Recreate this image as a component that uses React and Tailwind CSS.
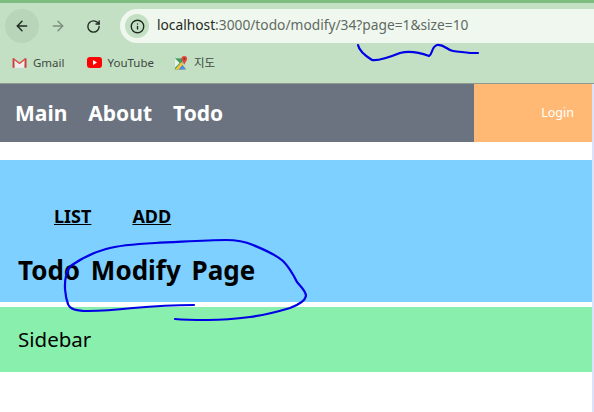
import { ArrowLeft, ArrowRight, RotateCw, Info } from 'lucide-react'

const uiFont = "font-['Noto_Sans','Noto_Sans_CJK_KR',sans-serif]"

const GmailIcon = () => (
  <svg width="15" height="12" viewBox="0 0 16 12">
    <path d="M0.5 1.5 L8 7 L15.5 1.5 V11 H0.5 Z" fill="#eeeeee" />
    <path d="M0.5 11 V1.5 L2.5 1 L2.8 11 Z" fill="#c5443a" />
    <path d="M15.5 11 V1.5 L13.5 1 L13.2 11 Z" fill="#c5443a" />
    <path d="M0.5 1.5 L2 0.8 L8 5.4 L14 0.8 L15.5 1.5 L8 7.4 Z" fill="#e0483e" />
  </svg>
)

const YoutubeIcon = () => (
  <svg width="15" height="11" viewBox="0 0 15 11">
    <rect width="15" height="11" rx="3" fill="#ff0000" />
    <path d="M6 3 L10 5.5 L6 8 Z" fill="#ffffff" />
  </svg>
)

const MapsIcon = () => (
  <svg width="14" height="16" viewBox="0 0 15 16">
    <path d="M1 3 H9 V15 H1 Z" fill="#3f9f5f" />
    <path d="M1 15 L8 7 L13 15 Z" fill="#f7c52f" />
    <path d="M5 15 L9 10 L13 15 Z" fill="#4a8cf0" />
    <path d="M1 3 L6 8 L1 13 Z" fill="#eeeeee" />
    <circle cx="11" cy="3.5" r="3" fill="#e0483e" />
    <path d="M8.5 5 L11 10 L13.5 5 Z" fill="#e0483e" />
    <circle cx="11" cy="3.5" r="1" fill="#8f2a24" />
  </svg>
)

const Bookmark = ({ icon, label, className }) => (
  <div className={`flex items-center gap-[6px] ${className}`}>
    {icon}
    <span className="text-[11.5px] leading-none text-[#3c4a3f]">{label}</span>
  </div>
)

const Scribbles = () => (
  <svg className="absolute left-0 top-0 pointer-events-none" width="594" height="412" fill="none" stroke="#0000e6" strokeWidth="2.2" strokeLinecap="round" strokeLinejoin="round">
    <path d="M358 45 C359 50 364 55 372 60 C378 61 390 57 400 53 C408 51 418 52 429 56 C433 54 431 47 437 45 C444 44 447 50 453 51 C459 52 464 52 470 53 L478 53" />
    <path d="M194 305 C175 305 155 306 133 308 C115 310 100 311 88 311 C78 311 70 310 68 304 C65 296 64 284 66 276 C67 270 68 268 72 265 C82 258 92 253 106 249 C120 245 135 244 155 243 C180 242 205 240 226 240 C238 240 246 242 253 245 C265 250 275 254 283 261 C290 268 294 276 297 282 C301 287 306 291 306 296 C305 301 298 305 290 308 C280 311 265 315 250 317 C235 319 222 320 208 320 C195 320 185 320 175 319" />
  </svg>
)

export default function App() {
  return (
    <div className={`relative w-[594px] h-[412px] overflow-hidden bg-white ${uiFont}`}>
      <div className="h-[3px] bg-[#7dbd80]" />

      {/* browser chrome */}
      <div className="h-[81px] bg-[#c4e0c4] border-b border-[#8e9a8e] pt-[6px]">
        <div className="flex items-center h-[34px]">
          <div className="flex items-center justify-center w-[34px] h-[34px] ml-[5px] rounded-full bg-[#b9d5b9]">
            <ArrowLeft size={16} strokeWidth={2.2} color="#1f2a20" />
          </div>
          <ArrowRight size={16} strokeWidth={2.2} color="#7d8f7e" className="ml-[11px]" />
          <RotateCw size={15} strokeWidth={2.2} color="#1f2a20" className="ml-[20px]" />
          <div className="flex items-center flex-1 h-[34px] ml-[19px] pl-[5px] rounded-l-full bg-[#eff7ef]">
            <div className="flex items-center justify-center w-[24px] h-[24px] rounded-full bg-[#c4e0c4]">
              <Info size={15} strokeWidth={2.2} color="#1f2a20" />
            </div>
            <span className="ml-[8px] -mt-[2px] text-[13.75px] text-[#1f2a20]">
              localhost<span className="text-[#5f6b62]">:3000/todo/modify/34?page=1&amp;size=10</span>
            </span>
          </div>
        </div>
        <div className="flex items-center h-[21px] mt-[9px]">
          <Bookmark icon={<GmailIcon />} label="Gmail" className="ml-[12px]" />
          <Bookmark icon={<YoutubeIcon />} label="YouTube" className="ml-[22px]" />
          <Bookmark icon={<MapsIcon />} label="지도" className="ml-[20px]" />
        </div>
      </div>

      {/* nav */}
      <div className="flex h-[58px] pr-[2px] bg-white">
        <div className="flex flex-1 items-center gap-[21px] pl-[15px] pt-[2px] bg-[#6b7280] text-[21px] font-bold text-white">
          <span>Main</span>
          <span>About</span>
          <span>Todo</span>
        </div>
        <div className="flex items-center justify-end w-[118px] pr-[18px] bg-[#ffb974] text-[12.5px] text-white">
          Login
        </div>
      </div>

      <div className="h-[18px]" />

      {/* page header */}
      <div className="h-[142px] bg-[#7dd0ff] mr-[2px] pl-[18px] pt-[43px]">
        <div className="flex gap-[41px] pl-[36px] text-[18px] leading-[26px] font-bold text-black underline">
          <span>LIST</span>
          <span>ADD</span>
        </div>
        <h1 className="mt-[23px] text-[26px] leading-[36px] font-bold text-black [word-spacing:4px]">Todo Modify Page</h1>
      </div>

      <div className="h-[5px]" />

      {/* sidebar */}
      <div className="flex items-center h-[65px] mr-[2px] pl-[18px] bg-[#88f0ac] text-[20.5px] text-black">
        Sidebar
      </div>

      <div className="absolute right-0 top-[84px] bottom-0 w-[2px] bg-[#dbe2fb]" />
      <Scribbles />
    </div>
  )
}
